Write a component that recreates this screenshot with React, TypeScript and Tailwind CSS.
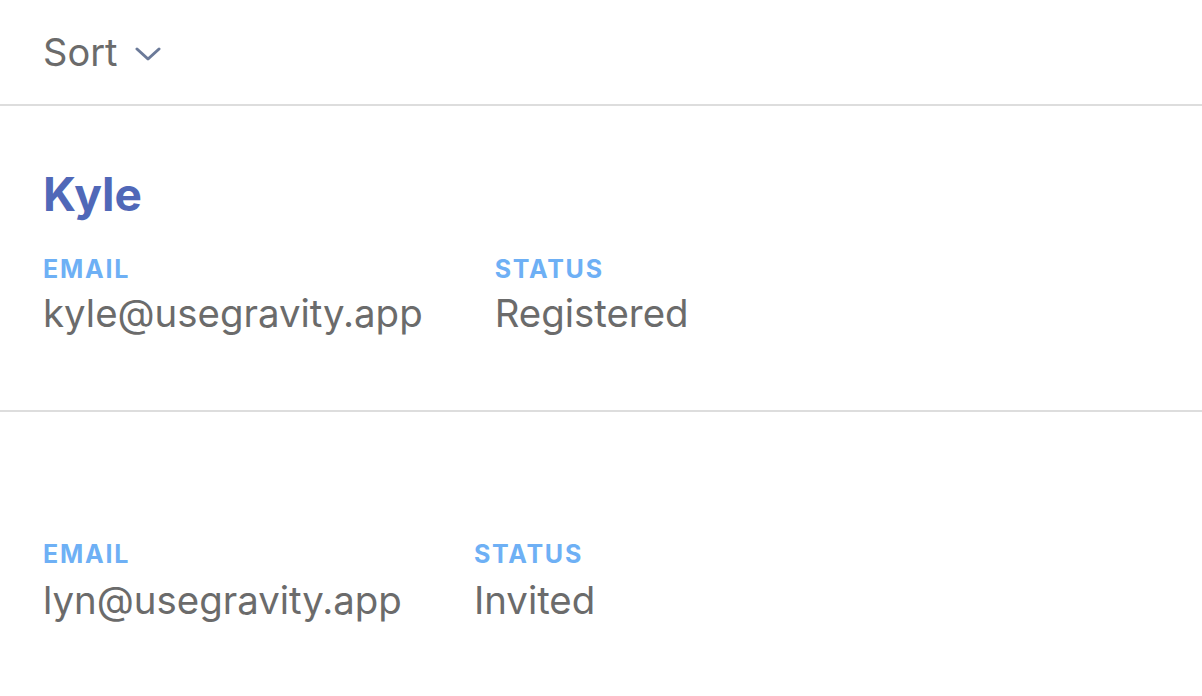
import React from "react";

const font = { fontFamily: "Inter, 'Noto Sans', sans-serif" };

function Field({ label, value, gap }: { label: string; value: string; gap: string }) {
  return (
    <div className="flex flex-col">
      <span className="text-[25px] leading-[30px] font-bold tracking-[0.07em] text-[#6eb0f5]">{label}</span>
      <span className={`text-[38.4px] leading-[46px] text-[#6b6b6b] ${gap}`}>{value}</span>
    </div>
  );
}

function Row({ name, email, status, last }: { name?: string; email: string; status: string; last?: boolean }) {
  const gap = name ? "mt-[6px]" : "mt-[8px]";
  return (
    <div
      className={`px-[43px] pb-[74px] ${last ? "" : "border-b-2 border-[#dddddd]"} ${name ? "pt-[60px]" : "pt-[127px]"}`}
    >
      {name ? (
        <div className="text-[46px] leading-[56px] font-bold text-[#5068b8] mb-[32px]">{name}</div>
      ) : null}
      <div className="flex gap-[72px]">
        <Field label="EMAIL" value={email} gap={gap} />
        <Field label="STATUS" value={status} gap={gap} />
      </div>
    </div>
  );
}

export default function App() {
  return (
    <div className="w-[1202px] h-[696px] bg-white overflow-hidden" style={font}>
      <div className="h-[106px] border-b-2 border-[#dddddd] px-[43px] flex items-center gap-[17px]">
        <span className="text-[38px] leading-[46px] text-[#6b6b6b]">Sort</span>
        <svg width="26" height="16" viewBox="0 0 26 16" fill="none" className="mt-[4px]">
          <path d="M2 3 L13 13 L24 3" stroke="#6b7a99" strokeWidth="3" strokeLinecap="round" strokeLinejoin="round" />
        </svg>
      </div>
      <Row name="Kyle" email="kyle@usegravity.app" status="Registered" />
      <Row email="lyn@usegravity.app" status="Invited" last />
    </div>
  );
}
